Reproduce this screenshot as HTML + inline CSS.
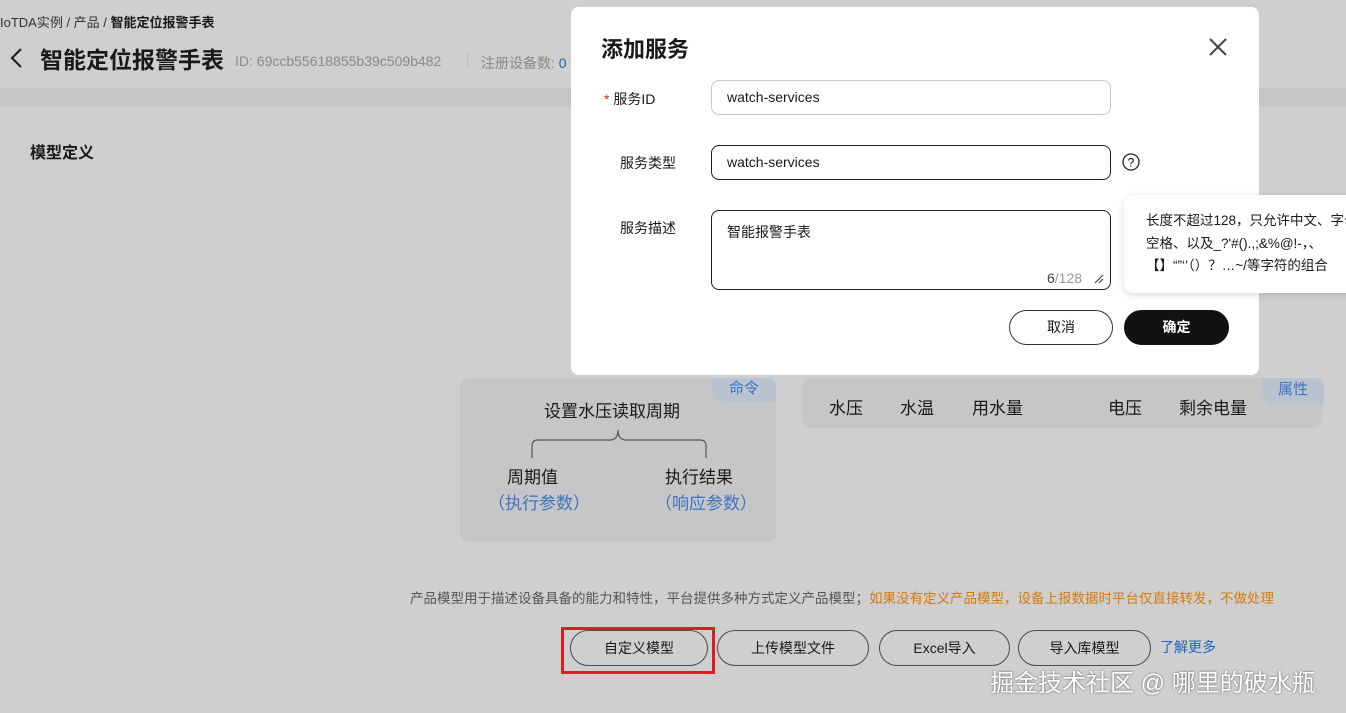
<!DOCTYPE html>
<html><head><meta charset="utf-8"><style>
*{margin:0;padding:0;box-sizing:border-box}
body{width:1346px;height:713px;overflow:hidden;background:#cfcfcf;font-family:"Liberation Sans","Noto Sans CJK SC",sans-serif;position:relative;color:#191919}
.a{position:absolute;white-space:nowrap}
.btn{position:absolute;height:36px;border:1px solid #4a4a4a;border-radius:18px;font-size:14px;text-align:center;line-height:34px;color:#191919}
.in{position:absolute;left:711px;width:400px;border:1px solid #1e1e1e;border-radius:8px;background:#fff;font-size:14px;padding-left:15px}
</style></head><body>
<div class="a" style="left:0;top:0;width:1346px;height:88px;background:#cfcfcf"></div>
<div class="a" style="left:0;top:88px;width:1346px;height:18px;background:#c6c6c6"></div>
<div class="a" style="left:0;top:106px;width:1346px;height:607px;background:#cfcfcf"></div>
<div class="a" style="left:0;top:12px;font-size:13px;color:#333">IoTDA实例 / 产品 / <b style="color:#191919">智能定位报警手表</b></div>
<svg class="a" style="left:8px;top:47px" width="16" height="22"><path d="M13 2 L4 11 L13 20" stroke="#222" stroke-width="2.2" fill="none"/></svg>
<div class="a" style="left:40px;top:41px;font-size:23px;font-weight:bold">智能定位报警手表</div>
<div class="a" style="left:235px;top:53px;font-size:14px;color:#8a8a8a">ID: 69ccb55618855b39c509b482</div>
<div class="a" style="left:467px;top:52px;width:1px;height:16px;background:#bbb"></div>
<div class="a" style="left:481px;top:53px;font-size:14px;color:#8a8a8a">注册设备数: <span style="color:#1d62c4">0</span></div>
<div class="a" style="left:30px;top:139px;font-size:16px;font-weight:bold">模型定义</div>

<div class="a" style="left:460px;top:378px;width:316px;height:164px;background:#c6c6c6;border-radius:8px"></div>
<div class="a" style="left:712px;top:378px;width:64px;height:24px;background:#b9c3d0;border-radius:0 8px 0 12px;color:#3d73c5;font-size:15px;text-align:center;line-height:22px">命令</div>
<div class="a" style="left:544px;top:397px;font-size:17px">设置水压读取周期</div>
<svg class="a" style="left:528px;top:422px" width="182" height="40"><path d="M4 36 V24 Q4 18 10 18 H82 Q90 18 90 8 Q90 18 98 18 H172 Q178 18 178 24 V36" stroke="#555" stroke-width="1.2" fill="none"/></svg>
<div class="a" style="left:507px;top:463px;font-size:17px">周期值</div>
<div class="a" style="left:488px;top:489px;font-size:17px;color:#3d73c5">（执行参数）</div>
<div class="a" style="left:665px;top:463px;font-size:17px">执行结果</div>
<div class="a" style="left:655px;top:489px;font-size:17px;color:#3d73c5">（响应参数）</div>

<div class="a" style="left:802px;top:378px;width:520px;height:50px;background:#c6c6c6;border-radius:8px"></div>
<div class="a" style="left:1262px;top:378px;width:62px;height:26px;background:#b9c3d0;border-radius:0 8px 0 12px;color:#3d73c5;font-size:15px;text-align:center;line-height:24px">属性</div>
<div class="a" style="left:829px;top:394px;font-size:17px">水压</div>
<div class="a" style="left:900px;top:394px;font-size:17px">水温</div>
<div class="a" style="left:972px;top:394px;font-size:17px">用水量</div>
<div class="a" style="left:1108px;top:394px;font-size:17px">电压</div>
<div class="a" style="left:1179px;top:394px;font-size:17px">剩余电量</div>

<div class="a" style="left:410px;top:587px;font-size:13.5px;color:#555">产品模型用于描述设备具备的能力和特性，平台提供多种方式定义产品模型；<span style="color:#d9780a">如果没有定义产品模型，设备上报数据时平台仅直接转发，不做处理</span></div>
<div class="a" style="left:561px;top:627px;width:154px;height:47px;border:3px solid #e11b22"></div>
<div class="btn" style="left:570px;top:630px;width:138px">自定义模型</div>
<div class="btn" style="left:717px;top:630px;width:152px">上传模型文件</div>
<div class="btn" style="left:879px;top:630px;width:131px">Excel导入</div>
<div class="btn" style="left:1018px;top:630px;width:133px">导入库模型</div>
<div class="a" style="left:1160px;top:637px;font-size:14px;color:#1d62c4">了解更多</div>
<div class="a" style="left:990px;top:663px;font-size:24px;color:#fff;text-shadow:0 0 2px #555">掘金技术社区 @ 哪里的破水瓶</div>

<div class="a" style="left:571px;top:7px;width:688px;height:368px;background:#fff;border-radius:8px"></div>
<div class="a" style="left:601px;top:32px;font-size:22px;font-weight:bold">添加服务</div>
<svg class="a" style="left:1208px;top:37px" width="20" height="20"><path d="M2 2L18 18M18 2L2 18" stroke="#444" stroke-width="2"/></svg>
<div class="a" style="left:604px;top:89px;font-size:14px"><span style="color:#e02020">*</span> 服务ID</div>
<div class="in" style="top:80px;height:35px;line-height:33px;border-color:#c8c8c8">watch-services</div>
<div class="a" style="left:620px;top:153px;font-size:14px">服务类型</div>
<div class="in" style="top:145px;height:35px;line-height:33px">watch-services</div>
<svg class="a" style="left:1122px;top:153px" width="18" height="18"><circle cx="9" cy="9" r="8" stroke="#222" stroke-width="1.3" fill="none"/><text x="9" y="13.5" font-size="12" text-anchor="middle" font-family="Liberation Sans">?</text></svg>
<div class="a" style="left:620px;top:218px;font-size:14px">服务描述</div>
<div class="in" style="top:210px;height:80px;padding-top:11px">智能报警手表</div>
<div class="a" style="left:1047px;top:270px;font-size:14px;color:#999"><span style="color:#444">6</span>/128</div>
<svg class="a" style="left:1094px;top:274px" width="10" height="10"><path d="M1 9L9 1M5 9L9 5" stroke="#333" stroke-width="1"/></svg>
<div class="btn" style="left:1009px;top:310px;width:104px;height:35px;line-height:33px;border-color:#333">取消</div>
<div class="btn" style="left:1124px;top:310px;width:105px;height:35px;line-height:33px;background:#111;color:#fff;border-color:#111;font-weight:bold">确定</div>

<div class="a" style="left:1124px;top:195px;width:240px;height:98px;background:#fff;border-radius:10px;box-shadow:0 2px 8px rgba(0,0,0,.15)"></div>
<div class="a" style="left:1146px;top:210px;font-size:13.5px;line-height:22.5px">长度不超过128，只允许中文、字母<br>空格、以及_?'#().,;&amp;%@!-，、<br>【】“”‘’（）？…~/等字符的组合</div>
</body></html>
